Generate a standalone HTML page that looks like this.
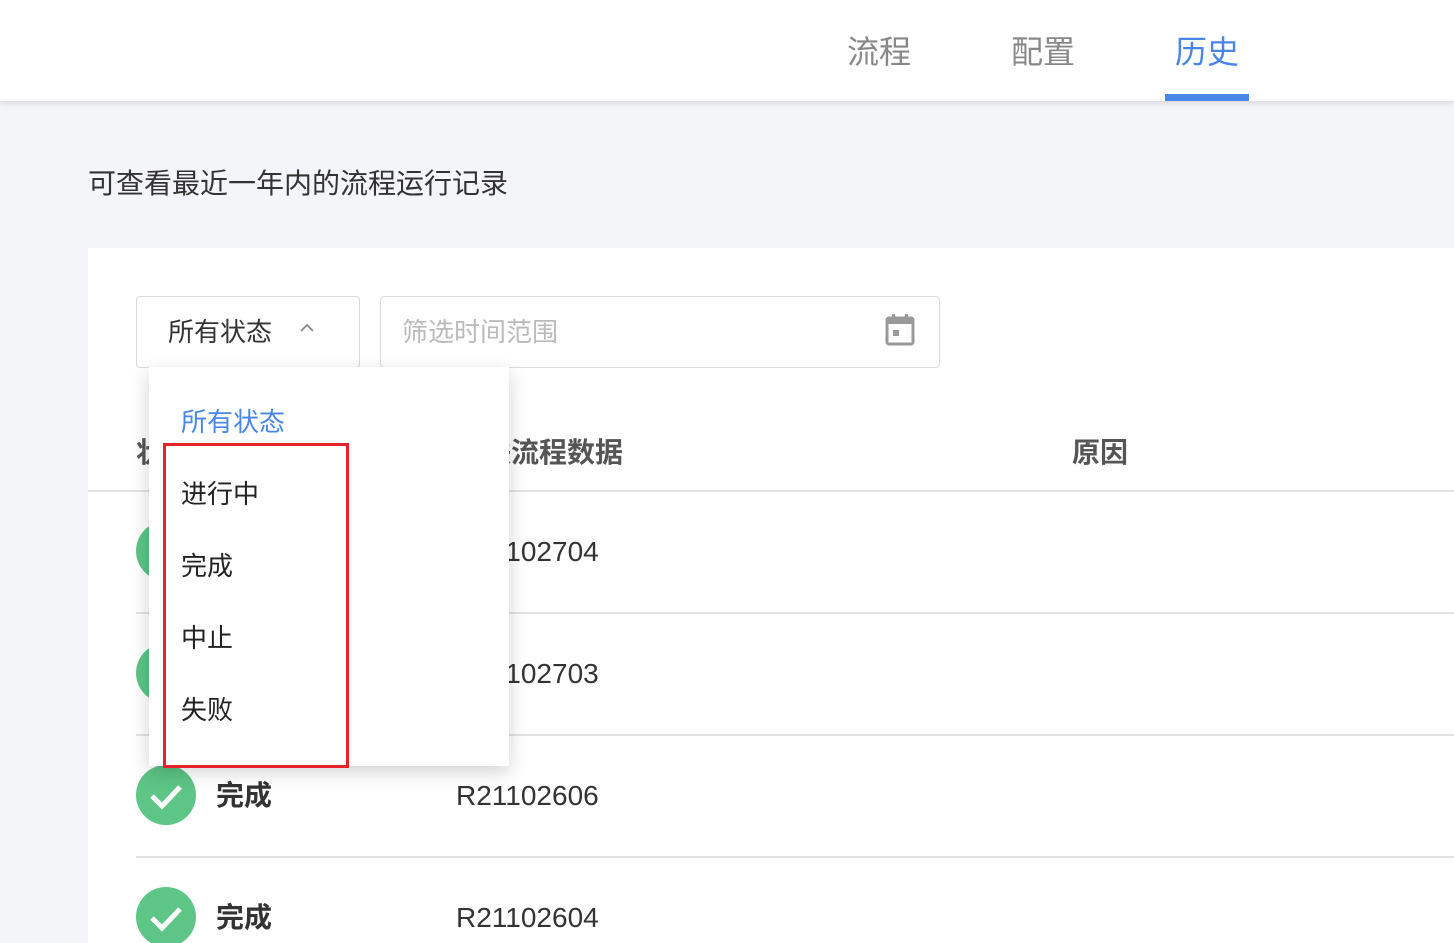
<!DOCTYPE html>
<html><head><meta charset="utf-8"><style>
*{margin:0;padding:0;box-sizing:border-box}
html,body{width:1454px;height:943px;overflow:hidden}
body{background:#f4f5f9;font-family:"Liberation Sans","Noto Sans CJK SC",sans-serif;position:relative;color:#333}
.hdr{position:absolute;left:0;top:0;width:1454px;height:101px;background:#fff;box-shadow:0 2px 6px rgba(0,0,0,.12)}
.tab{position:absolute;top:32px;font-size:32px;color:#888;line-height:40px}
.ul{position:absolute;left:1165px;top:94px;width:84px;height:7px;background:#4a86e8}
.abs{position:absolute;white-space:nowrap}
.card{position:absolute;left:88px;top:248px;width:1366px;height:695px;background:#fff}
.box{position:absolute;border:1.5px solid #dcdcdc;border-radius:4px;background:#fff}
.line{position:absolute;height:2px;background:#e2e2e2}
.circ{position:absolute;left:136px;width:60px;height:60px;border-radius:50%;background:#5dc585}
.st{position:absolute;left:216px;font-size:28px;font-weight:bold;color:#333;line-height:30px}
.id{position:absolute;left:456px;font-size:28px;color:#333;line-height:30px}
.dd{position:absolute;left:149px;top:367px;width:360px;height:399px;background:#fff;box-shadow:0 6px 18px rgba(0,0,0,.18)}
.it{position:absolute;left:181px;font-size:26px;line-height:30px;color:#222}
</style></head><body>
<div class="hdr">
<div class="tab" style="left:847px">流程</div>
<div class="tab" style="left:1011px">配置</div>
<div class="tab" style="left:1175px;color:#4a86e8">历史</div>
<div class="ul"></div>
</div>
<div class="abs" style="left:88px;top:167px;font-size:28px;line-height:34px;color:#333">可查看最近一年内的流程运行记录</div>
<div class="card"></div>
<div class="box" style="left:136px;top:296px;width:224px;height:72px"></div>
<div class="abs" style="left:168px;top:316px;font-size:26px;line-height:32px;color:#333">所有状态</div>
<svg class="abs" style="left:298px;top:322px" width="18" height="12" viewBox="0 0 18 12"><path d="M3 9 L9 3 L15 9" fill="none" stroke="#888" stroke-width="1.8"/></svg>
<div class="box" style="left:380px;top:296px;width:560px;height:72px"></div>
<div class="abs" style="left:402px;top:316px;font-size:26px;line-height:32px;color:#bbb">筛选时间范围</div>
<svg class="abs" style="left:884px;top:313px" width="32" height="34" viewBox="0 0 32 34"><rect x="3" y="5" width="26" height="26" rx="2" fill="none" stroke="#999" stroke-width="3"/><rect x="3" y="5" width="26" height="6" fill="#999"/><rect x="8" y="1" width="3" height="6" fill="#999"/><rect x="21" y="1" width="3" height="6" fill="#999"/><rect x="9" y="17" width="6" height="6" fill="#999"/></svg>
<div class="abs" style="left:136px;top:437px;font-size:28px;font-weight:bold;color:#555;line-height:32px">状态</div>
<div class="abs" style="left:455px;top:437px;font-size:28px;font-weight:bold;color:#555;line-height:32px">关联流程数据</div>
<div class="abs" style="left:1072px;top:437px;font-size:28px;font-weight:bold;color:#555;line-height:32px">原因</div>
<div class="line" style="left:88px;top:490px;width:1366px"></div>
<div class="line" style="left:136px;top:612px;width:1318px"></div>
<div class="line" style="left:136px;top:734px;width:1318px"></div>
<div class="line" style="left:136px;top:856px;width:1318px"></div>
<div class="circ" style="top:521px"></div><div class="circ" style="top:643px"></div>
<div class="circ" style="top:765px"></div><div class="circ" style="top:887px"></div>
<svg class="abs" style="left:136px;top:765px" width="60" height="60"><path d="M16 31 L26 41 L44 22" fill="none" stroke="#fff" stroke-width="5"/></svg>
<svg class="abs" style="left:136px;top:887px" width="60" height="60"><path d="M16 31 L26 41 L44 22" fill="none" stroke="#fff" stroke-width="5"/></svg>
<div class="st" style="top:537px">完成</div><div class="id" style="top:537px">R21102704</div>
<div class="st" style="top:659px">完成</div><div class="id" style="top:659px">R21102703</div>
<div class="st" style="top:781px">完成</div><div class="id" style="top:781px">R21102606</div>
<div class="st" style="top:903px">完成</div><div class="id" style="top:903px">R21102604</div>
<div class="dd"></div>
<div class="it" style="top:407px;color:#4a86e8">所有状态</div>
<div class="it" style="top:479px">进行中</div>
<div class="it" style="top:551px">完成</div>
<div class="it" style="top:623px">中止</div>
<div class="it" style="top:695px">失败</div>
<div class="abs" style="left:163px;top:443px;width:186px;height:325px;border:3px solid #e8202a"></div>
</body></html>
